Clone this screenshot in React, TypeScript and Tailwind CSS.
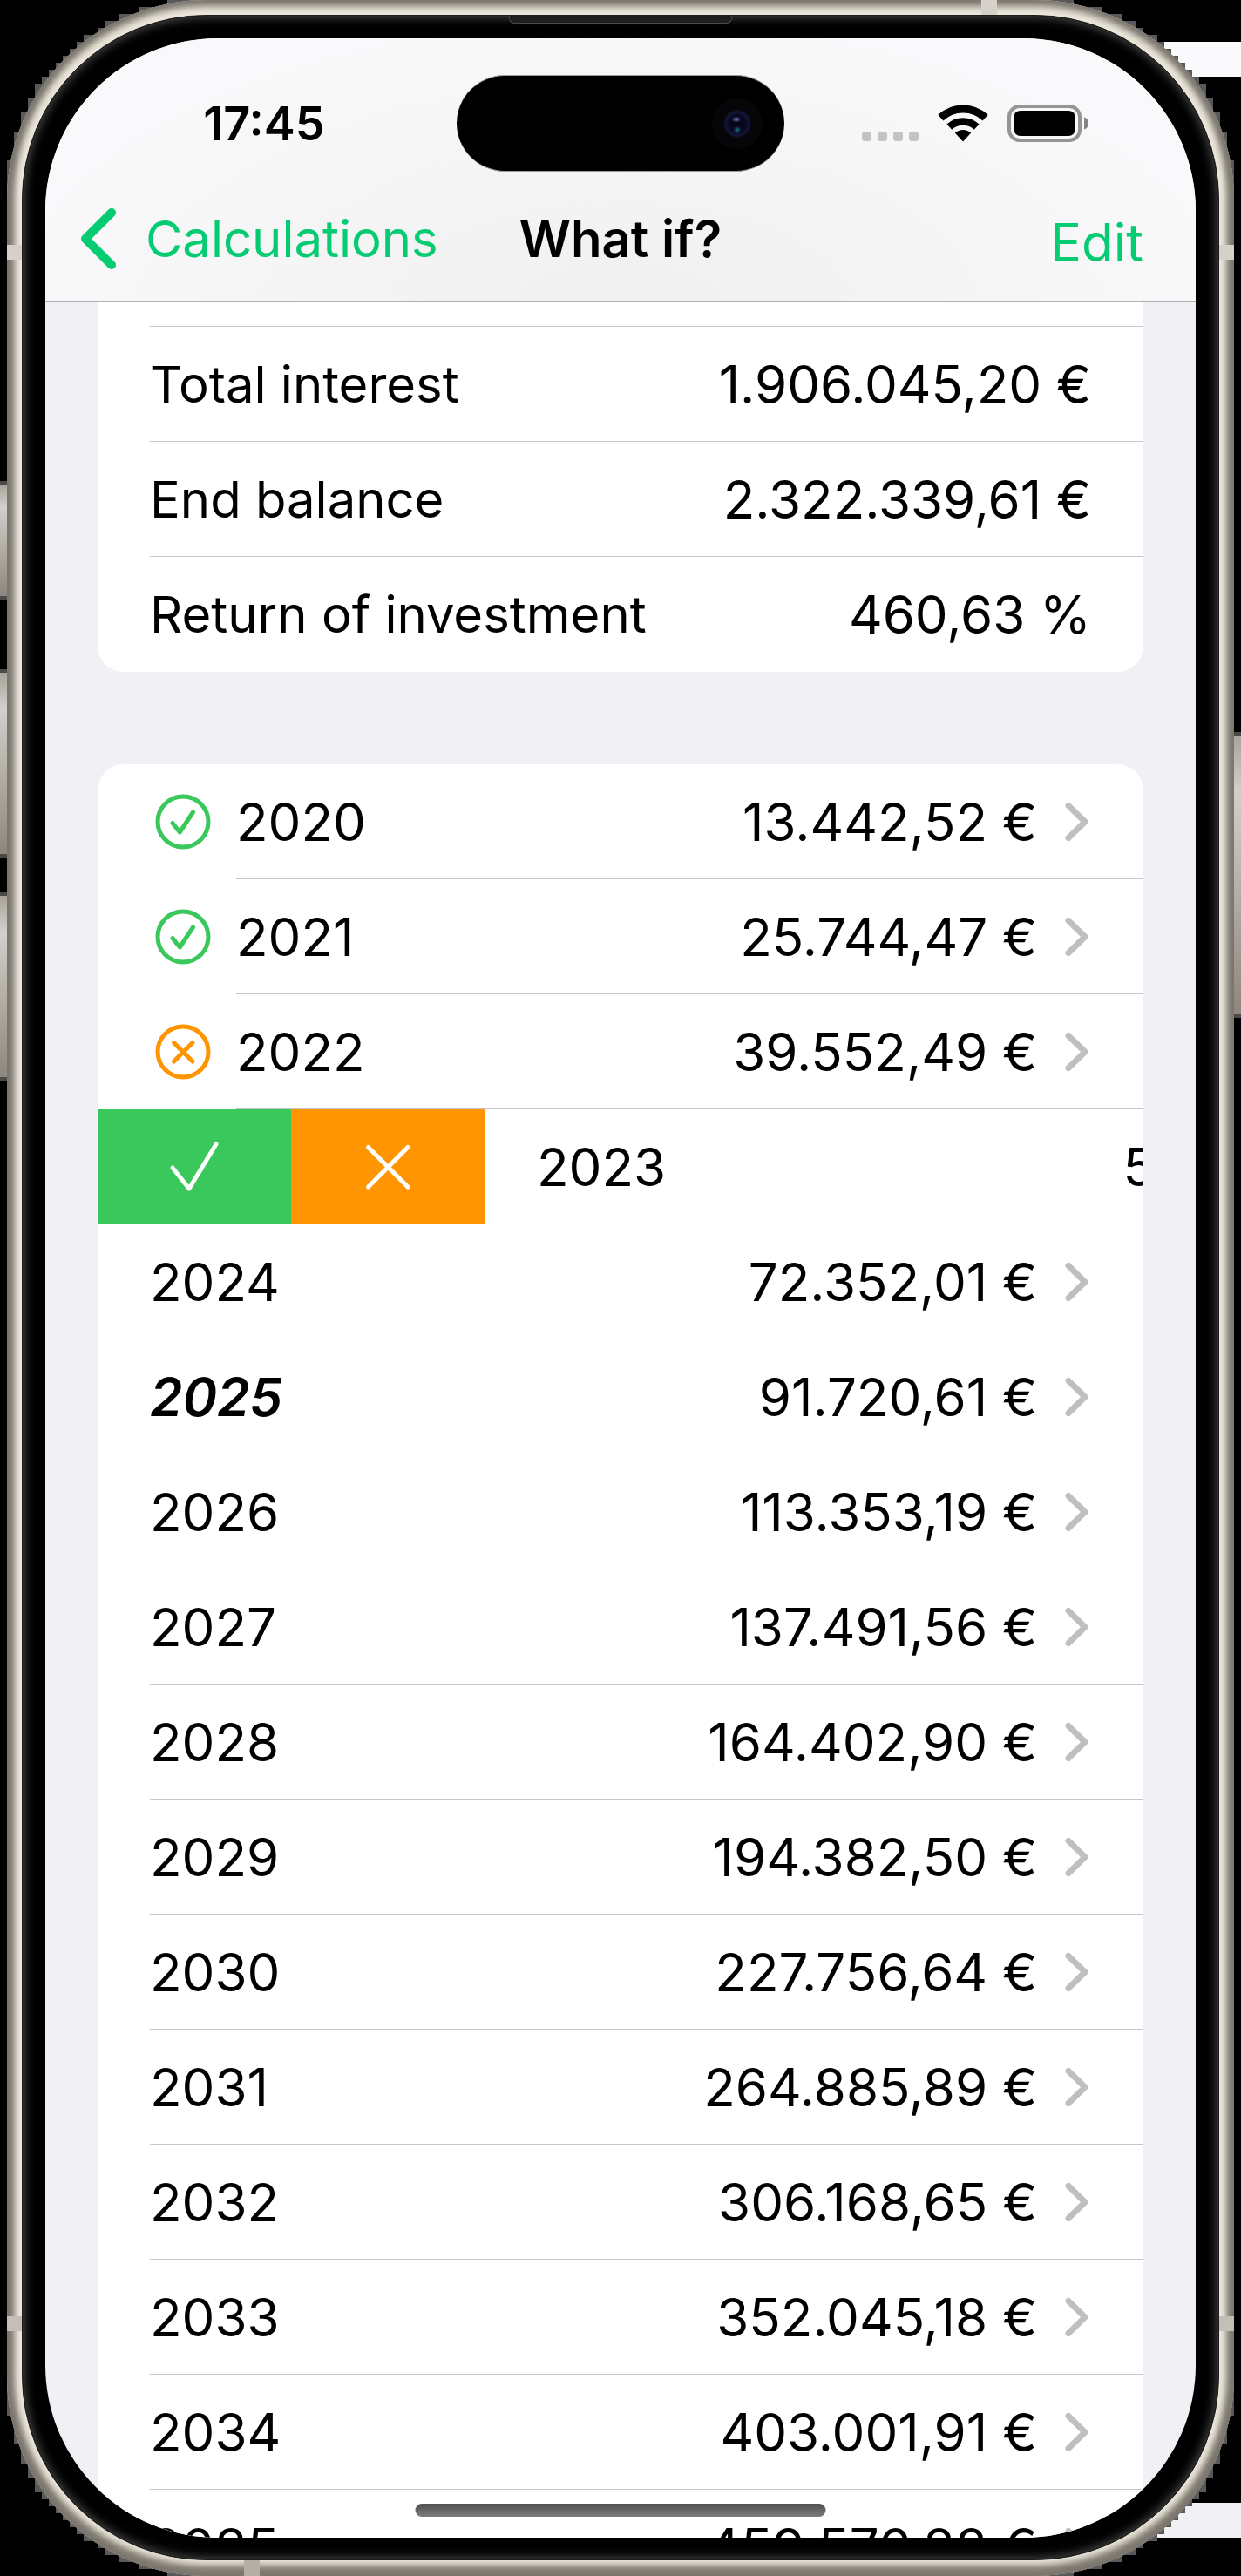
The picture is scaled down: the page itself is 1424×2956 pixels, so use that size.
import type { ReactNode } from "react";

type Status = "ok" | "skipped";

interface YearRow {
  year: string;
  amount: string;
  status?: Status;
  current?: boolean;
  swiped?: boolean;
}

const summary = [
  { label: "Total interest", value: "1.906.045,20 €" },
  { label: "End balance", value: "2.322.339,61 €" },
  { label: "Return of investment", value: "460,63 %" },
];

const years: YearRow[] = [
  { year: "2020", amount: "13.442,52 €", status: "ok" },
  { year: "2021", amount: "25.744,47 €", status: "ok" },
  { year: "2022", amount: "39.552,49 €", status: "skipped" },
  { year: "2023", amount: "55.050,06 €", swiped: true },
  { year: "2024", amount: "72.352,01 €" },
  { year: "2025", amount: "91.720,61 €", current: true },
  { year: "2026", amount: "113.353,19 €" },
  { year: "2027", amount: "137.491,56 €" },
  { year: "2028", amount: "164.402,90 €" },
  { year: "2029", amount: "194.382,50 €" },
  { year: "2030", amount: "227.756,64 €" },
  { year: "2031", amount: "264.885,89 €" },
  { year: "2032", amount: "306.168,65 €" },
  { year: "2033", amount: "352.045,18 €" },
  { year: "2034", amount: "403.001,91 €" },
  { year: "2035", amount: "459.576,88 €" },
];

/* ---------- icons ---------- */

function StatusIcon({ status }: { status: Status }) {
  return (
    <svg
      viewBox="0 0 64 64"
      className={status === "ok" ? "size-16 text-[#3ac75b]" : "size-16 text-[#ff9502]"}
      fill="none"
      stroke="currentColor"
      strokeLinecap="round"
      strokeLinejoin="round"
      role="img"
      aria-label={status === "ok" ? "Confirmed" : "Skipped"}
    >
      <circle cx="32" cy="32" r="29" strokeWidth="5" />
      {status === "ok" ? (
        <path d="M20 33.5 28.3 44 43.5 21" strokeWidth="5" />
      ) : (
        <path d="M21.5 21.5 43 43M43 21.5 21.5 43" strokeWidth="5" />
      )}
    </svg>
  );
}

function Chevron() {
  return (
    <svg viewBox="0 0 30 46" className="h-[46px] w-[30px] shrink-0" fill="none" aria-hidden="true">
      <path d="M4 4.500 23 23 4 41.500" stroke="#bfbfbf" strokeWidth="7" strokeLinecap="round" strokeLinejoin="round" />
    </svg>
  );
}

function BackChevron() {
  return (
    <svg viewBox="0 0 42 72" className="h-[72px] w-[42px]" fill="none" aria-hidden="true">
      <path d="M36 6 6 36 36 66" stroke="#05cb72" strokeWidth="10" strokeLinecap="round" strokeLinejoin="round" />
    </svg>
  );
}

function StatusIndicators() {
  return (
    <div className="flex items-center">
      <svg viewBox="0 0 65 43" className="h-[43px] w-[65px]" fill="#c3c3c3" aria-hidden="true">
        <rect x="0" y="31" width="11" height="11" rx="3.500" />
        <rect x="18" y="31" width="11" height="11" rx="3.500" />
        <rect x="36" y="31" width="11" height="11" rx="3.500" />
        <rect x="54" y="31" width="11" height="11" rx="3.500" />
      </svg>
      <svg viewBox="0 0 58 43" className="ml-[22px] h-[43px] w-[58px]" fill="none" stroke="#000" role="img" aria-label="Wi-Fi">
        <path d="M3.400 15.100A37.500 37.500 0 0 1 54.600 15.100" strokeWidth="9" />
        <path d="M13.300 25.700A23 23 0 0 1 44.700 25.700" strokeWidth="8.500" />
        <path d="M29 42.500 19.800 32.600A13.500 13.500 0 0 1 38.200 32.600Z" fill="#000" stroke="none" />
      </svg>
      <svg viewBox="0 0 94 43" className="ml-[22px] h-[43px] w-[94px]" role="img" aria-label="Battery full">
        <rect x="2" y="2" width="81" height="39" rx="12" fill="none" stroke="#959595" strokeWidth="4" />
        <rect x="7" y="7" width="71" height="29" rx="8" fill="#000" />
        <path d="M88 14.500C91.500 15.500 93 18.500 93 21.500S91.500 27.500 88 28.500Z" fill="#858585" />
      </svg>
    </div>
  );
}

function Camera() {
  return (
    <svg viewBox="0 0 60 60" className="size-[60px]" aria-hidden="true">
      <defs>
        <radialGradient id="lens">
          <stop offset="0" stopColor="#040410" />
          <stop offset="0.600" stopColor="#08081f" />
          <stop offset="0.850" stopColor="#15153a" />
          <stop offset="1" stopColor="#080812" />
        </radialGradient>
        <radialGradient id="flare">
          <stop offset="0" stopColor="#8f90d0" />
          <stop offset="1" stopColor="#3a3a80" stopOpacity="0" />
        </radialGradient>
        <radialGradient id="glint">
          <stop offset="0" stopColor="#1c7f86" />
          <stop offset="1" stopColor="#1c3a6a" stopOpacity="0" />
        </radialGradient>
      </defs>
      <circle cx="30" cy="30" r="29" fill="#060508" />
      <circle cx="30" cy="30" r="16" fill="url(#lens)" />
      <ellipse cx="29" cy="25" rx="6" ry="4" fill="url(#flare)" />
      <ellipse cx="30" cy="37" rx="5" ry="5" fill="url(#glint)" />
    </svg>
  );
}

/* ---------- device shell ---------- */

function CornerSteps({ className }: { className: string }) {
  return (
    <svg viewBox="0 0 240 240" className={`absolute size-[240px] ${className}`} fill="#59595b" aria-hidden="true">
      <path d="M240 0H192V8H160V16H136V24H120V32H112V40H96V48H88V56H80V64H72V72H64V80H56V88H48V96H40V112H32V128H24V152H16V184H8V240H240Z" />
    </svg>
  );
}

function SideKey({ className }: { className: string }) {
  return (
    <span
      aria-hidden="true"
      className={`absolute w-2 border-y-4 border-[#4c4a47] bg-linear-to-b from-[#a8a39c] via-[#d3cfca] via-20% to-[#8d877f] ${className}`}
    />
  );
}

function Device({ children }: { children: ReactNode }) {
  return (
    <div className="relative overflow-hidden bg-black px-2">
      <div aria-hidden="true">
        <div className="absolute top-12 right-0 h-10 w-28 bg-[#fafafc]" />
        <div className="absolute right-0 bottom-11 h-10 w-28 bg-[#f1f0f5]" />
        <CornerSteps className="top-0 left-0" />
        <CornerSteps className="top-0 right-0 -scale-x-100" />
        <CornerSteps className="bottom-0 left-0 -scale-y-100" />
        <CornerSteps className="right-0 bottom-0 -scale-100" />
        <SideKey className="top-[552px] left-0 h-[136px]" />
        <SideKey className="top-[768px] left-0 h-[216px]" />
        <SideKey className="top-[1024px] left-0 h-[216px]" />
        <SideKey className="top-[840px] right-0 h-[328px]" />
      </div>
      <div className="relative overflow-hidden rounded-[229px] bg-[#ece7db] px-[17px] pt-[17px] pb-[18px] shadow-[inset_0_0_8px_7px_#7a756c,inset_0_-6px_8px_6px_#8b857a]">
        <div aria-hidden="true">
          <span className="absolute top-[281px] left-0 h-[17px] w-full bg-[#d6d0ca]" />
          <span className="absolute bottom-[281px] left-0 h-[17px] w-full bg-[#c4beb8]" />
          <span className="absolute top-0 right-[272px] h-10 w-[18px] bg-[#d6d0ca]" />
          <span className="absolute bottom-0 left-[272px] h-10 w-[18px] bg-[#b4aea5]" />
        </div>
        <div className="relative rounded-[212px] border border-[#1c1b1a] bg-black px-[26px] pt-[26px] pb-[25px] shadow-[inset_0_0_12px_2px_#4b4b4b]">
          <span
            aria-hidden="true"
            className="absolute top-0 left-1/2 h-[9px] w-64 -translate-x-1/2 rounded-b-md border-x border-b border-[#4a4a4a] bg-[#1e1e1e]"
          />
          {children}
        </div>
      </div>
    </div>
  );
}

/* ---------- rows ---------- */

function SwipedRow({ row }: { row: YearRow }) {
  return (
    <li className="relative flex h-[132px] overflow-hidden">
      <button type="button" aria-label="Confirm" className="flex w-[222px] shrink-0 items-center justify-center bg-[#3ac75b]">
        <svg viewBox="0 0 60 60" className="size-[60px]" fill="none" stroke="#fff" strokeWidth="5" strokeLinecap="round" strokeLinejoin="round" aria-hidden="true">
          <path d="M5 31 24 55 55 4" />
        </svg>
      </button>
      <button type="button" aria-label="Skip" className="flex w-[222px] shrink-0 items-center justify-center bg-[#ff9502]">
        <svg viewBox="0 0 60 60" className="size-[60px]" fill="none" stroke="#fff" strokeWidth="5" strokeLinecap="round" aria-hidden="true">
          <path d="M7.500 7.500 53 53M53 7.500 7.500 53" />
        </svg>
      </button>
      <a href={`#${row.year}`} className="flex w-full shrink-0 items-center pr-[60px] pl-[60px]">
        <span className="flex-1">{row.year}</span>
        <span className="mr-8">{row.amount}</span>
        <Chevron />
      </a>
      <span aria-hidden="true" className="absolute right-0 bottom-0 left-[60px] h-px bg-[#3c3c43]/30" />
    </li>
  );
}

function Row({ row }: { row: YearRow }) {
  return (
    <li className="overflow-hidden last:h-[55px]">
      <a href={`#${row.year}`} className="flex h-[132px] pl-[60px]">
        {row.status && (
          <span className="mr-6 flex w-[75px] shrink-0 items-center justify-center">
            <StatusIcon status={row.status} />
          </span>
        )}
        <span className="flex flex-1 items-center border-b border-[#c6c6c8] pr-[60px]">
          <span className={row.current ? "flex-1 font-semibold italic" : "flex-1"}>{row.year}</span>
          <span className="mr-8">{row.amount}</span>
          <Chevron />
        </span>
      </a>
    </li>
  );
}

/* ---------- screen ---------- */

export default function App() {
  return (
    <Device>
      <div className="relative overflow-hidden rounded-[198px] bg-[#f1f0f5] font-['Inter',sans-serif] text-[60px] leading-[74px] text-black">
        <header className="border-b border-[#b0b0b3] bg-[radial-gradient(ellipse_at_50%_105%,#f1f1f1_10%,#f9f9fb_75%)]">
          <div className="grid grid-cols-[1fr_376px_1fr] items-center pt-[42px]">
            <time className="pl-[30px] text-center text-[54px] leading-[60px] font-semibold">17:45</time>
            <div className="flex h-[111px] items-center justify-end rounded-full border-y border-[#9a9a9a] bg-black pr-6">
              <Camera />
            </div>
            <div className="flex justify-end pr-[122px]">
              <StatusIndicators />
            </div>
          </div>
          <nav className="mt-2 grid h-[138px] grid-cols-[1fr_auto_1fr] items-center pb-0 text-[58px]">
            <a href="#calculations" className="flex items-center gap-[33px] pl-10 text-[#05cb72]">
              <BackChevron />
              Calculations
            </a>
            <h1 className="font-semibold">What if?</h1>
            <button type="button" className="justify-self-end pt-2 pr-[60px] text-[60px] text-[#05cb72]">
              Edit
            </button>
          </nav>
          <div className="h-0.5" />
        </header>

        <main className="px-[60px]">
          <dl className="rounded-b-[30px] bg-white">
            <div className="h-[29px] pl-[60px]">
              <div className="h-full border-b border-[#c6c6c8]" />
            </div>
            {summary.map((item, i) => (
              <div key={item.label} className="h-[132px] pl-[60px]">
                <div
                  className={
                    i < summary.length - 1
                      ? "flex h-full items-center justify-between border-b border-[#c6c6c8] pr-[60px]"
                      : "flex h-full items-center justify-between pr-[60px]"
                  }
                >
                  <dt className="text-[58px]">{item.label}</dt>
                  <dd>{item.value}</dd>
                </div>
              </div>
            ))}
          </dl>

          <ul className="mt-[106px] overflow-hidden rounded-t-[30px] bg-white">
            {years.map((row) => (row.swiped ? <SwipedRow key={row.year} row={row} /> : <Row key={row.year} row={row} />))}
          </ul>
        </main>

        <div
          aria-hidden="true"
          className="absolute bottom-6 left-1/2 h-[15px] w-[471px] -translate-x-1/2 rounded-full bg-linear-to-b from-[#505050] to-[#7c7c7c]"
        />
      </div>
    </Device>
  );
}
